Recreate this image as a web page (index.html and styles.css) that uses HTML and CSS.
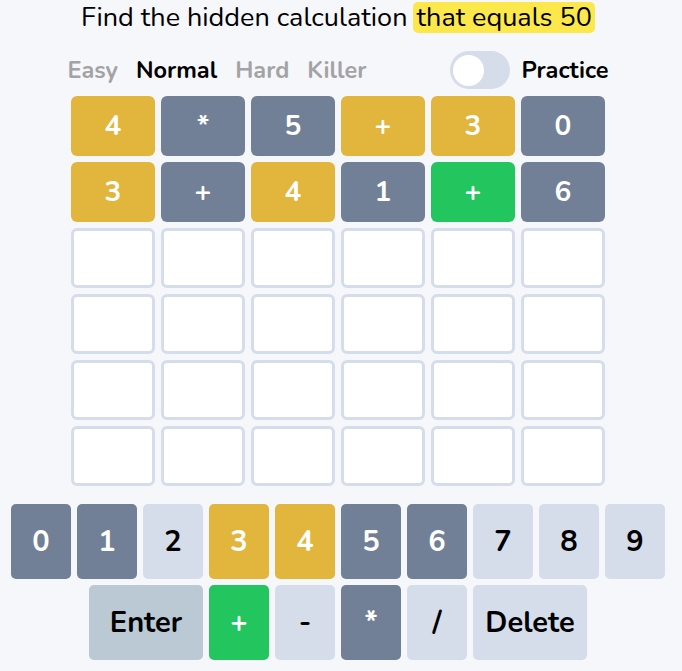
FILE: index.html
```html
<!DOCTYPE html>
<html lang="en">
<head>
  <meta charset="UTF-8">
  <meta name="viewport" content="width=device-width, initial-scale=1.0">
  <title>Calculation Game</title>
  <link rel="stylesheet" href="styles.css">
</head>
<body>
  <div class="page">
    <p class="title">Find the hidden calculation <span class="highlight">that equals 50</span></p>

    <div class="options">
      <div class="levels">
        <span class="level">Easy</span>
        <span class="level active">Normal</span>
        <span class="level">Hard</span>
        <span class="level">Killer</span>
      </div>
      <div class="practice">
        <div class="toggle"><div class="knob"></div></div>
        <span>Practice</span>
      </div>
    </div>

    <div class="board">
      <div class="tile present">4</div>
      <div class="tile absent">*</div>
      <div class="tile absent">5</div>
      <div class="tile present">+</div>
      <div class="tile present">3</div>
      <div class="tile absent">0</div>

      <div class="tile present">3</div>
      <div class="tile absent">+</div>
      <div class="tile present">4</div>
      <div class="tile absent">1</div>
      <div class="tile correct">+</div>
      <div class="tile absent">6</div>

      <div class="tile"></div><div class="tile"></div><div class="tile"></div>
      <div class="tile"></div><div class="tile"></div><div class="tile"></div>
      <div class="tile"></div><div class="tile"></div><div class="tile"></div>
      <div class="tile"></div><div class="tile"></div><div class="tile"></div>
      <div class="tile"></div><div class="tile"></div><div class="tile"></div>
      <div class="tile"></div><div class="tile"></div><div class="tile"></div>
      <div class="tile"></div><div class="tile"></div><div class="tile"></div>
      <div class="tile"></div><div class="tile"></div><div class="tile"></div>
    </div>

    <div class="keyboard">
      <div class="key-row">
        <button class="key absent">0</button>
        <button class="key absent">1</button>
        <button class="key">2</button>
        <button class="key present">3</button>
        <button class="key present">4</button>
        <button class="key absent">5</button>
        <button class="key absent">6</button>
        <button class="key">7</button>
        <button class="key">8</button>
        <button class="key">9</button>
      </div>
      <div class="key-row">
        <button class="key wide enter">Enter</button>
        <button class="key correct">+</button>
        <button class="key">-</button>
        <button class="key absent">*</button>
        <button class="key">/</button>
        <button class="key wide">Delete</button>
      </div>
    </div>
  </div>
</body>
</html>
```

FILE: styles.css
```css
body {
  margin: 0;
  background: #f6f7fb;
  font-family: "Nunito", Lato, "Noto Sans", sans-serif;
  color: #000;
}

.page {
  display: flex;
  flex-direction: column;
  align-items: center;
  padding-right: 6px;
}

.title {
  margin: 0;
  padding-top: 2px;
  font-size: 27px;
  line-height: 31px;
}

.highlight {
  display: inline-block;
  background: #fde84c;
  border-radius: 5px;
  padding: 0 3px;
  line-height: 31px;
  margin-left: -1px;
}

/* difficulty + practice */
.options {
  display: flex;
  justify-content: space-between;
  align-items: center;
  width: 541px;
  margin-top: 18px;
  height: 38px;
}

.levels {
  display: flex;
  gap: 18px;
}

.level {
  font-size: 23.5px;
  font-weight: 700;
  color: #a3a3a3;
}

.level.active {
  color: #000;
}

.practice {
  display: flex;
  align-items: center;
  gap: 11px;
  font-size: 23.5px;
  font-weight: 700;
}

.toggle {
  width: 60px;
  height: 38px;
  border-radius: 19px;
  background: #d4dde9;
  display: flex;
  align-items: center;
  padding-left: 3px;
  box-sizing: border-box;
}

.knob {
  width: 31px;
  height: 31px;
  border-radius: 50%;
  background: #fff;
}

/* board */
.board {
  display: grid;
  grid-template-columns: repeat(6, 84px);
  grid-auto-rows: 60px;
  gap: 6px;
  margin-top: 7px;
}

.tile {
  display: flex;
  align-items: center;
  justify-content: center;
  border-radius: 6px;
  border: 3px solid #d4dde9;
  background: #fff;
  font-size: 28px;
  font-weight: 700;
  color: #fff;
}

.tile.present,
.tile.absent,
.tile.correct {
  border: none;
}

.present { background: #e2b53d; color: #fff; }
.absent { background: #718096; color: #fff; }
.correct { background: #22c55e; color: #fff; }

/* keyboard */
.keyboard {
  display: flex;
  flex-direction: column;
  align-items: center;
  gap: 6px;
  margin-top: 18px;
}

.key-row {
  display: flex;
  gap: 6px;
}

.key {
  width: 60px;
  height: 75px;
  border: none;
  border-radius: 5px;
  background: #d4dde9;
  font-family: inherit;
  font-size: 29px;
  font-weight: 700;
  color: #000;
  padding: 0;
}

.key.present,
.key.absent,
.key.correct {
  color: #fff;
}

.key.present { background: #e2b53d; }
.key.absent { background: #718096; }
.key.correct { background: #22c55e; }

.key.wide {
  width: 114px;
}

.key.enter {
  background: #bbc9d5;
}
```
